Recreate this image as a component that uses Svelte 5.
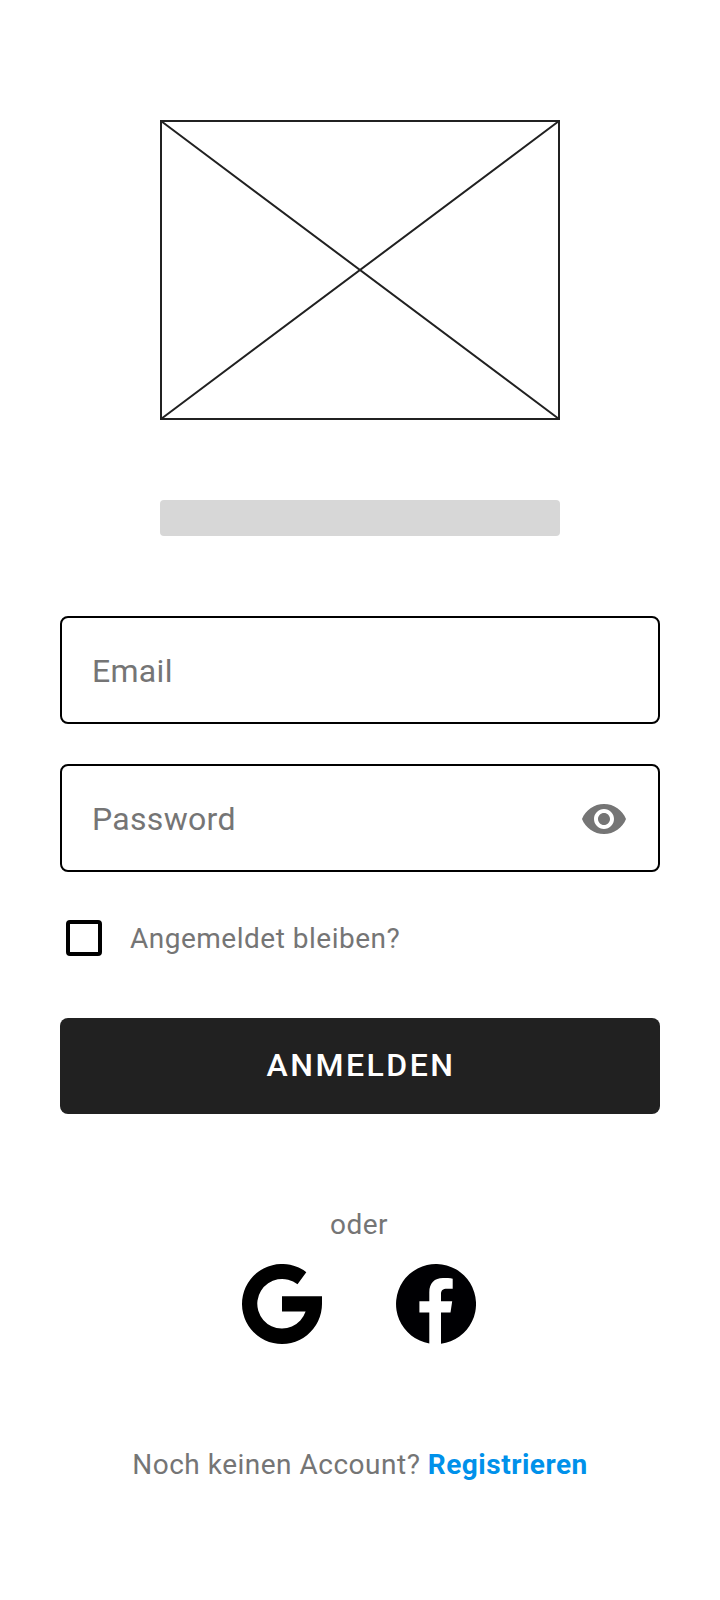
<script>
  let email = $state('');
  let password = $state('');
  let visible = $state(false);
  let stay = $state(false);
</script>

<main>
  <svg class="logo" viewBox="0 0 400 300" aria-hidden="true">
    <rect x="1" y="1" width="398" height="298" />
    <path d="M1 1 399 299M1 299 399 1" />
  </svg>
  <div class="title"></div>

  <form onsubmit={(e) => e.preventDefault()}>
    <label class="field">
      <input type="text" placeholder="Email" bind:value={email} />
    </label>
    <div class="field">
      <input type={visible ? 'text' : 'password'} placeholder="Password" bind:value={password} />
      <button class="eye" type="button" onclick={() => (visible = !visible)}>
        <svg viewBox="0 0 24 24" width="48" height="48">
          <path d="M12 4.5C7 4.5 2.73 7.61 1 12c1.73 4.39 6 7.5 11 7.5s9.27-3.11 11-7.5c-1.73-4.39-6-7.5-11-7.5zM12 17c-2.76 0-5-2.24-5-5s2.24-5 5-5 5 2.24 5 5-2.24 5-5 5zm0-8c-1.66 0-3 1.34-3 3s1.34 3 3 3 3-1.34 3-3-1.34-3-3-3z" />
        </svg>
      </button>
    </div>
    <label class="stay">
      <input type="checkbox" bind:checked={stay} />
      <span>Angemeldet bleiben?</span>
    </label>
    <button class="submit" type="submit">ANMELDEN</button>
  </form>

  <p class="or">oder</p>
  <div class="social">
    <svg viewBox="0 0 80 80" width="80" height="80">
      <path d="M64.3 8.2A40 40 0 1 0 80 40V32.3H40V47.6H63.6A24.8 24.8 0 1 1 55.5 20.3Z" />
    </svg>
    <svg class="fb" viewBox="0 0 80 80" width="80" height="80">
      <path d="M33.3 79.43V48.5H23.4V37.2H33.3V28.5C33.3 19 38.5 14.1 47 14.1C51 14.1 54 14.3 56.7 14.7V24.8H51C46.8 24.8 45 26.6 45 30V37.2H56.2L54.5 48.5H45V79.69A40 40 0 1 0 33.3 79.43Z" />
    </svg>
  </div>

  <p class="register">Noch keinen Account? <b>Registrieren</b></p>
</main>

<style>
  :global(body) {
    background: #fff;
  }
  main {
    box-sizing: border-box;
    width: 720px;
    height: 1600px;
    padding: 120px 60px 0;
    display: flex;
    flex-direction: column;
    align-items: center;
    background: #fff;
    color: #757575;
    font: 28px/32px Roboto, sans-serif;
    letter-spacing: 0.5px;
  }
  .logo {
    width: 400px;
    height: 300px;
    fill: none;
    stroke: #212121;
    stroke-width: 2;
  }
  .title {
    width: 400px;
    height: 36px;
    margin-top: 80px;
    border-radius: 4px;
    background: #d7d7d7;
  }
  form {
    width: 600px;
    margin-top: 80px;
    display: flex;
    flex-direction: column;
  }
  .field {
    box-sizing: border-box;
    height: 108px;
    margin-bottom: 40px;
    padding: 2px 30px 0;
    display: flex;
    align-items: center;
    border: 2px solid #000;
    border-radius: 8px;
  }
  .field input {
    flex: 1;
    min-width: 0;
    height: 48px;
    padding: 0;
    border: 0;
    outline: 0;
    background: none;
    color: #212121;
    font: 32px/48px Roboto, sans-serif;
    letter-spacing: 0.3px;
  }
  .field input::placeholder {
    color: #757575;
    opacity: 1;
  }
  .eye {
    display: flex;
    padding: 0;
    border: 0;
    background: none;
    fill: #757575;
  }
  .stay {
    display: flex;
    align-items: center;
    gap: 28px;
    height: 36px;
    margin: 8px 0 62px 6px;
  }
  .stay span {
    padding-top: 2px;
  }
  .stay input {
    appearance: none;
    box-sizing: border-box;
    width: 36px;
    height: 36px;
    margin: 0;
    border: 4px solid #000;
    border-radius: 4px;
  }
  .stay input:checked {
    background: #000;
  }
  .submit {
    height: 96px;
    padding: 0 0 2px 2px;
    border: 0;
    border-radius: 8px;
    background: #212121;
    color: #fff;
    font: 500 32px/32px Roboto, sans-serif;
    letter-spacing: 2.5px;
  }
  p {
    margin: 0;
    white-space: nowrap;
  }
  .or {
    margin-top: 95px;
    margin-right: 2px;
  }
  .social {
    display: flex;
    gap: 74px;
    margin-top: 23px;
    margin-right: 2px;
  }
  .fb {
    fill: #000003;
  }
  .register {
    margin-top: 105px;
  }
  b {
    color: #0091ea;
    font-weight: 700;
  }
</style>
